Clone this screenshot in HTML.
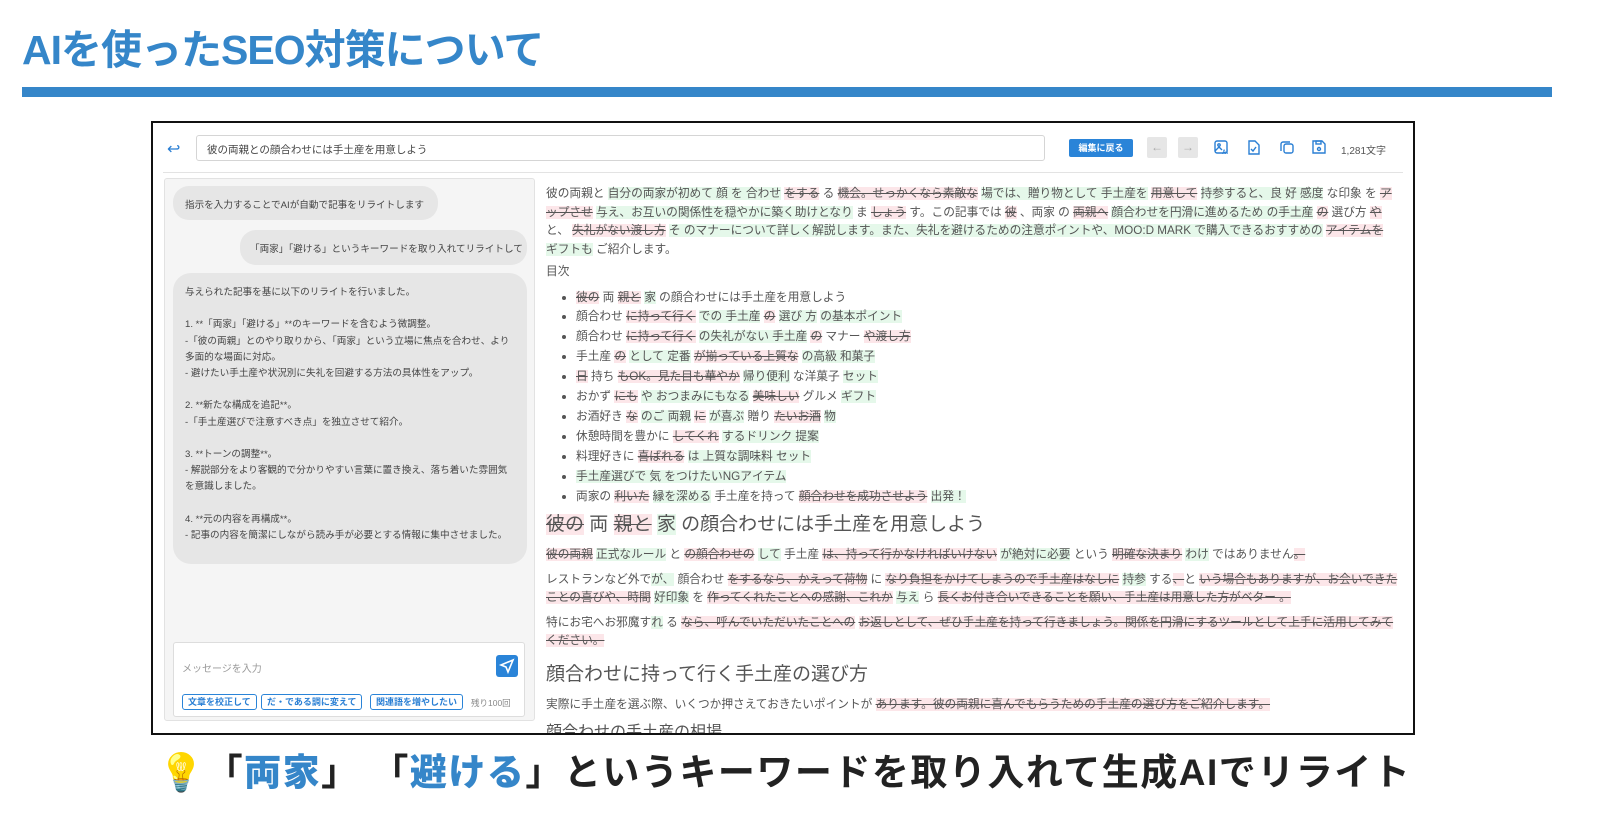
<!DOCTYPE html>
<html><head><meta charset="utf-8">
<style>
*{margin:0;padding:0;box-sizing:border-box}
body{width:1600px;height:814px;background:#fff;font-family:"Liberation Sans","Noto Sans CJK JP",sans-serif;position:relative;overflow:hidden;color:#444}
.title{position:absolute;left:22px;top:16px;font-size:41px;font-weight:bold;color:#3586c9;letter-spacing:-1px}
.bar{position:absolute;left:22px;top:87px;width:1530px;height:10px;background:#3586c9}
.frame{position:absolute;left:151px;top:121px;width:1264px;height:614px;border:2px solid #111;background:#fff;overflow:hidden}
.ret{position:absolute;left:14px;top:16px;color:#2a7fd4;font-size:16px}
.inp{position:absolute;left:43px;top:12px;width:849px;height:26px;border:1px solid #d5d5d5;border-radius:3px;font-size:10.5px;padding:6px 10px;color:#444}
.btn{position:absolute;left:916px;top:16px;width:64px;height:18px;background:#2a84d8;color:#fff;font-size:9px;font-weight:bold;border-radius:2px;text-align:center;line-height:18px}
.nav{position:absolute;top:14px;width:20px;height:21px;background:#e6e6e6;border-radius:2px;color:#aaa;font-size:12px;text-align:center;line-height:21px}
.ic{position:absolute;top:17px}
.cnt{position:absolute;left:1188px;top:19px;font-size:10px;color:#555}
.hr{position:absolute;left:10px;right:10px;top:49px;height:1px;background:#e3e3e3}
.left{position:absolute;left:11px;top:55px;width:371px;height:543px;background:#f5f5f5;border:1px solid #e2e2e2;border-radius:3px}
.bub{position:absolute;background:#e6e6e6;border-radius:16px;font-size:9.8px;color:#444;white-space:nowrap}
.msg{position:absolute;left:8px;top:463px;width:352px;height:75px;background:#fff;border:1px solid #ddd;border-radius:3px}
.chip{position:absolute;top:51px;height:16px;border:1px solid #2a84d8;border-radius:3px;font-size:9px;color:#2a7fd4;padding:0 5px;line-height:14px;font-weight:bold}
.right{position:absolute;left:393px;top:62px;width:852px;font-size:11.7px;color:#555}
.right p{line-height:18.5px}
.g{background:#e5f8ea}
.r{background:#fce6e9;text-decoration:line-through}
ul{list-style:none;margin-top:6px}
ul li{line-height:19.9px;padding-left:30px;position:relative}
ul li:before{content:"";position:absolute;left:16px;top:8px;width:4px;height:4px;border-radius:50%;background:#555}
h3{font-weight:normal;font-size:19px;color:#555}
.cap{position:absolute;left:158px;top:742px;font-size:37px;font-weight:bold;color:#222;white-space:nowrap;letter-spacing:1.5px}
.cap b{color:#3586c9}
</style></head><body>
<div class="title">AIを使ったSEO対策について</div>
<div class="bar"></div>
<div class="frame">
 <div class="ret">↩</div>
 <div class="inp">彼の両親との顔合わせには手土産を用意しよう</div>
 <div class="btn">編集に戻る</div>
 <div class="nav" style="left:994px">←</div>
 <div class="nav" style="left:1025px">→</div>
 <svg class="ic" style="left:1061px" width="15" height="15" viewBox="0 0 15 15" fill="none" stroke="#2a7fd4" stroke-width="1.4"><rect x="1" y="1" width="12" height="12" rx="2"/><circle cx="5" cy="5" r="1.2"/><path d="M1 11l4-4 3 3"/><text x="8" y="14" font-size="6" fill="#2a7fd4" stroke="none" font-weight="bold">AI</text></svg>
 <svg class="ic" style="left:1094px" width="13" height="15" viewBox="0 0 13 15" fill="none" stroke="#2a7fd4" stroke-width="1.4"><path d="M2 1h6l4 4v9H2z"/><path d="M4 9l2 2 3-4"/></svg>
 <svg class="ic" style="left:1127px" width="14" height="14" viewBox="0 0 14 14" fill="none" stroke="#2a7fd4" stroke-width="1.4"><rect x="4" y="4" width="9" height="9" rx="2"/><path d="M10 2H3a2 2 0 0 0-2 2v7"/></svg>
 <svg class="ic" style="left:1159px" width="14" height="14" viewBox="0 0 14 14" fill="none" stroke="#2a7fd4" stroke-width="1.4"><path d="M1 1h9l3 3v9H1z"/><rect x="4" y="1" width="5" height="3"/><circle cx="7" cy="9" r="1.5"/></svg>
 <div class="cnt">1,281文字</div>
 <div class="hr"></div>
 <div class="left">
  <div class="bub" style="left:8px;top:7px;width:265px;height:34px;padding:11px 12px;font-size:9.6px">指示を入力することでAIが自動で記事をリライトします</div>
  <div class="bub" style="left:75px;top:51px;width:287px;height:35px;padding:11px 10px;text-align:right;font-size:9.6px">「両家」「避ける」というキーワードを取り入れてリライトして</div>
  <div class="bub" style="left:8px;top:94px;width:354px;height:291px;padding:12px 12px;line-height:16.2px;border-radius:18px;white-space:normal;font-size:9.6px">与えられた記事を基に以下のリライトを行いました。<br><br>1. **「両家」「避ける」**のキーワードを含むよう微調整。<br>-「彼の両親」とのやり取りから、「両家」という立場に焦点を合わせ、より多面的な場面に対応。<br>- 避けたい手土産や状況別に失礼を回避する方法の具体性をアップ。<br><br>2. **新たな構成を追記**。<br>-「手土産選びで注意すべき点」を独立させて紹介。<br><br>3. **トーンの調整**。<br>- 解説部分をより客観的で分かりやすい言葉に置き換え、落ち着いた雰囲気を意識しました。<br><br>4. **元の内容を再構成**。<br>- 記事の内容を簡潔にしながら読み手が必要とする情報に集中させました。</div>
  <div class="msg">
   <div style="position:absolute;left:8px;top:17px;font-size:10px;color:#999">メッセージを入力</div>
   <div style="position:absolute;left:322px;top:12px;width:22px;height:22px;background:#2a84d8;border-radius:3px"><svg width="22" height="22" viewBox="0 0 22 22" fill="none" stroke="#fff" stroke-width="1.6"><path d="M5 10l12-5-5 12-2-5z"/></svg></div>
   <div class="chip" style="left:8px">文章を校正して</div>
   <div class="chip" style="left:87px">だ・である調に変えて</div>
   <div class="chip" style="left:196px">関連語を増やしたい</div>
   <div style="position:absolute;left:297px;top:54px;font-size:8.5px;color:#888">残り100回</div>
  </div>
 </div>
 <div class="right">
  <p>彼の両親と <span class="g">自分の両家が初めて 顔 を 合わせ</span> <span class="r">をする</span> る <span class="r">機会。せっかくなら素敵な</span> <span class="g">場では、贈り物として 手土産を</span> <span class="r">用意して</span> <span class="g">持参すると、良 好 感度</span> な印象 を <span class="r">アップさせ</span> <span class="g">与え、お互いの関係性を穏やかに築く助けとなり</span> ま <span class="r">しょう</span> す。この記事では <span class="r">彼</span> 、両家 の <span class="r">両親へ</span> <span class="g">顔合わせを円滑に進めるため の手土産</span> <span class="r">の</span> 選び方 <span class="r">や</span> と、 <span class="r">失礼がない渡し方</span> <span class="g">そ のマナーについて詳しく解説します。また、失礼を避けるための注意ポイントや、MOO:D MARK で購入できるおすすめの</span> <span class="r">アイテムを</span> <span class="g">ギフトも</span> ご紹介します。</p>
  <p style="margin-top:4px">目次</p>
  <ul>
   <li><span class="r">彼の</span> 両 <span class="r">親と</span> <span class="g">家</span> の顔合わせには手土産を用意しよう</li>
   <li>顔合わせ <span class="r">に持って行く</span> <span class="g">での 手土産</span> <span class="r">の</span> <span class="g">選び 方</span> <span class="g">の基本ポイント</span></li>
   <li>顔合わせ <span class="r">に持って行く</span> <span class="g">の失礼がない 手土産</span> <span class="r">の</span> マナー <span class="r">や渡し方</span></li>
   <li>手土産 <span class="r">の</span> <span class="g">として 定番</span> <span class="r">が揃っている上質な</span> <span class="g">の高級 和菓子</span></li>
   <li><span class="r">日</span> 持ち <span class="r">もOK。見た目も華やか</span> <span class="g">帰り便利</span> な洋菓子 <span class="g">セット</span></li>
   <li>おかず <span class="r">にも</span> <span class="g">や おつまみにもなる</span> <span class="r">美味しい</span> グルメ <span class="g">ギフト</span></li>
   <li>お酒好き <span class="r">な</span> <span class="g">のご 両親</span> <span class="r">に</span> <span class="g">が喜ぶ</span> 贈り <span class="r">たいお酒</span> <span class="g">物</span></li>
   <li>休憩時間を豊かに <span class="r">してくれ</span> <span class="g">するドリンク 提案</span></li>
   <li>料理好きに <span class="r">喜ばれる</span> <span class="g">は 上質な調味料 セット</span></li>
   <li><span class="g">手土産選びで 気 をつけたいNGアイテム</span></li>
   <li>両家の <span class="r">利いた</span> <span class="g">縁を深める</span> 手土産を持って <span class="r">顔合わせを成功させよう</span> <span class="g">出発！</span></li>
  </ul>
  <h3 style="margin-top:3px"><span class="r">彼の</span> 両 <span class="r">親と</span> <span class="g">家</span> の顔合わせには手土産を用意しよう</h3>
  <p style="margin-top:10px"><span class="r">彼の両親</span> <span class="g">正式なルール</span> と <span class="r">の顔合わせの</span> <span class="g">して</span> 手土産 <span class="r">は、持って行かなければいけない</span> <span class="g">が絶対に必要</span> という <span class="r">明確な決まり</span> <span class="g">わけ</span> ではありません<span class="r">。</span></p>
  <p style="margin-top:6px">レストランなど外で<span class="g">が、</span> 顔合わせ <span class="r">をするなら、かえって荷物</span> に <span class="r">なり負担をかけてしまうので手土産はなしに</span> <span class="g">持参</span> する<span class="r">、</span>と <span class="r">いう場合もありますが、お会いできたことの喜びや、時間</span> <span class="g">好印象</span> を <span class="r">作ってくれたことへの感謝、これか</span> <span class="g">与え</span> ら <span class="r">長くお付き合いできることを願い、手土産は用意した方がベター 。</span></p>
  <p style="margin-top:6px">特にお宅へお邪魔す<span class="g">れ</span> る <span class="r">なら、呼んでいただいたことへの</span> <span class="r">お返しとして、ぜひ手土産を持って行きましょう。関係を円滑にするツールとして上手に活用してみてください。</span></p>
  <h3 style="margin-top:8px">顔合わせに持って行く手土産の選び方</h3>
  <p style="margin-top:10px">実際に手土産を選ぶ際、いくつか押さえておきたいポイントが <span class="r">あります。彼の両親に喜んでもらうための手土産の選び方をご紹介します。</span></p>
  <h3 style="margin-top:4px;font-size:16px">顔合わせの手土産の相場</h3>
 </div>
</div>
<div class="cap">💡「<b>両家</b>」 「<b>避ける</b>」というキーワードを取り入れて生成AIでリライト</div>
</body></html>
